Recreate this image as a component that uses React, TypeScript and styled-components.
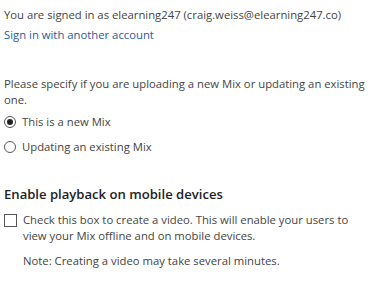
import * as React from "react";
import styled, { createGlobalStyle } from "styled-components";

const Global = createGlobalStyle`
  html, body {
    margin: 0;
    background: #fff;
  }
  body {
    font-family: "Open Sans", "Noto Sans", sans-serif;
    font-size: 11.3px;
    color: #444;
  }
`;

export default function App() {
  return (
    <Page>
      <Global />
      <Account>
        <Line>You are signed in as elearning247 (craig.weiss@elearning247.co)</Line>
        <Link href="#">Sign in with another account</Link>
      </Account>

      <Prompt>
        Please specify if you are uploading a new Mix or updating an existing
        one.
      </Prompt>
      <Options>
        <Option>
          <Radio checked />
          This is a new Mix
        </Option>
        <Option>
          <Radio />
          Updating an existing Mix
        </Option>
      </Options>

      <Heading>Enable playback on mobile devices</Heading>
      <CheckRow>
        <Box />
        <CheckText>
          <Line>
            Check this box to create a video. This will enable your users to
            view your Mix offline and on mobile devices.
          </Line>
          <Note>Note: Creating a video may take several minutes.</Note>
        </CheckText>
      </CheckRow>
    </Page>
  );
}

const Page = styled.div`
  width: 384px;
  height: 293px;
  padding: 7px 4px 0;
  box-sizing: border-box;
  overflow: hidden;
`;

const Account = styled.div`
  display: flex;
  flex-direction: column;
  gap: 4px;
  line-height: 16px;
`;

const Line = styled.div`
  line-height: 16px;
`;

const Link = styled.a`
  color: #1e5c9b;
  text-decoration: none;
  align-self: flex-start;
`;

const Prompt = styled.p`
  margin: 33px 0 0;
  line-height: 16px;
`;

const Options = styled.div`
  display: flex;
  flex-direction: column;
  gap: 9px;
  margin-top: 6px;
`;

const Option = styled.label`
  display: flex;
  align-items: center;
  gap: 6px;
  line-height: 16px;
`;

type RadioProps = { checked?: boolean };

const Radio = styled.span<RadioProps>`
  width: 12px;
  height: 12px;
  box-sizing: border-box;
  border: 1px solid #555;
  border-radius: 50%;
  display: flex;
  align-items: center;
  justify-content: center;

  &::after {
    content: "";
    width: 6px;
    height: 6px;
    border-radius: 50%;
    background: ${({ checked }) => (checked ? "#222" : "transparent")};
  }
`;

const Heading = styled.h3`
  margin: 30px 0 0;
  font-size: 13.1px;
  font-weight: 600;
  color: #222;
  line-height: 18px;
`;

const CheckRow = styled.div`
  display: flex;
  align-items: flex-start;
  gap: 6px;
  margin-top: 9px;
`;

const CheckText = styled.div`
  max-width: 335px;
`;

const Box = styled.span`
  flex: none;
  width: 13px;
  height: 13px;
  box-sizing: border-box;
  border: 1px solid #555;
  margin-top: 2px;
`;

const Note = styled.div`
  margin-top: 9px;
  line-height: 16px;
`;
